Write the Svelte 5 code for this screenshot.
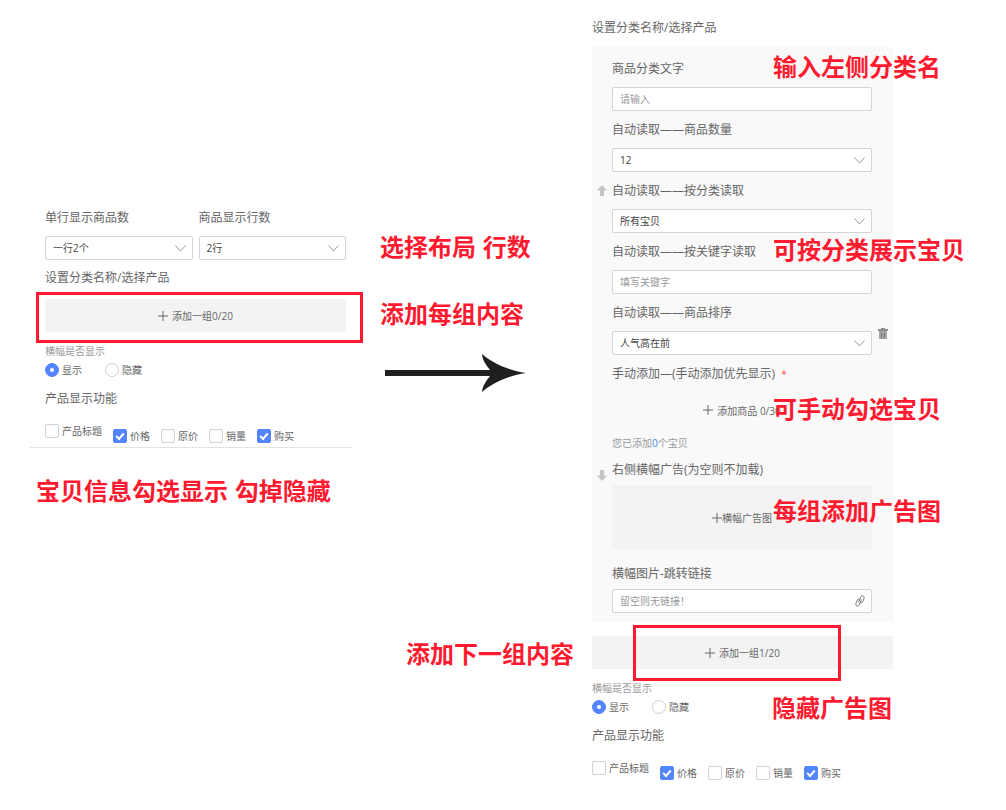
<script>
  let perRow = $state('一行2个');
  let rows = $state('2行');
  let count = $state('12');
  let category = $state('所有宝贝');
  let order = $state('人气高在前');

  const features = [
    { name: '产品标题', on: false },
    { name: '价格', on: true },
    { name: '原价', on: false },
    { name: '销量', on: false },
    { name: '购买', on: true }
  ];
</script>

{#snippet plus()}
  <svg class="plus" width="10" height="10" viewBox="0 0 10 10" aria-hidden="true">
    <path d="M5 0V10M0 5H10" stroke="#666" stroke-width="1" fill="none" />
  </svg>
{/snippet}

{#snippet chevron()}
  <svg class="chevron" width="11" height="7" viewBox="0 0 11 7" aria-hidden="true">
    <path d="M.5 .5L5.500 6L10.500 .5" stroke="#999" stroke-width="1" fill="none" />
  </svg>
{/snippet}

{#snippet moveArrow()}
  <svg width="10" height="11" viewBox="0 0 10 11" aria-hidden="true">
    <path d="M5 0L10 5.500H7V11H3V5.500H0Z" fill="#c4c4c4" />
  </svg>
{/snippet}

{#snippet display(id)}
  <fieldset class="banner-mode">
    <legend>横幅是否显示</legend>
    <div class="radios">
      <label><input type="radio" name="banner-{id}" checked />显示</label>
      <label><input type="radio" name="banner-{id}" />隐藏</label>
    </div>
  </fieldset>
  <fieldset class="features">
    <legend>产品显示功能</legend>
    <div class="checks">
      {#each features as f}
        <label><input type="checkbox" checked={f.on} />{f.name}</label>
      {/each}
    </div>
  </fieldset>
{/snippet}

<main>
  <section class="col left">
    <div class="pair">
      <div class="field">
        <label for="per-row">单行显示商品数</label>
        <div class="control">
          <select id="per-row" bind:value={perRow}><option>一行2个</option></select>
          {@render chevron()}
        </div>
      </div>
      <div class="field">
        <label for="rows">商品显示行数</label>
        <div class="control">
          <select id="rows" bind:value={rows}><option>2行</option></select>
          {@render chevron()}
        </div>
      </div>
    </div>
    <h2>设置分类名称/选择产品</h2>
    <div class="add-wrap first">
      <button class="add" type="button">{@render plus()}添加一组0/20</button>
      <span class="frame"></span>
    </div>
    {@render display('a')}
    <hr />
    <p class="note summary">宝贝信息勾选显示 勾掉隐藏</p>
  </section>

  <section class="middle">
    <p class="note">选择布局 行数</p>
    <p class="note second">添加每组内容</p>
    <svg class="arrow" width="142" height="38" viewBox="0 0 142 38" aria-hidden="true">
      <path
        d="M0 16H105C101 11 97.500 6 97 0C107 9 124 16.500 141 19C124 21.500 107 29 97 38C97.500 32 101 27 105 22H0Z"
        fill="#1f1f1f"
      />
    </svg>
    <p class="note next">添加下一组内容</p>
  </section>

  <section class="col right">
    <h2>设置分类名称/选择产品</h2>
    <div class="group">
      <div class="gutter moves">
        <button type="button" aria-label="上移">{@render moveArrow()}</button>
        <button type="button" class="down" aria-label="下移">{@render moveArrow()}</button>
      </div>
      <div class="fields">
        <div class="field">
          <label for="title">商品分类文字</label>
          <div class="control"><input id="title" type="text" placeholder="请输入" /></div>
          <span class="note pin">输入左侧分类名</span>
        </div>
        <div class="field">
          <label for="count">自动读取——商品数量</label>
          <div class="control">
            <select id="count" bind:value={count}><option>12</option></select>
            {@render chevron()}
          </div>
        </div>
        <div class="field">
          <label for="category">自动读取——按分类读取</label>
          <div class="control">
            <select id="category" bind:value={category}><option>所有宝贝</option></select>
            {@render chevron()}
          </div>
        </div>
        <div class="field">
          <label for="keyword">自动读取——按关键字读取</label>
          <div class="control"><input id="keyword" type="text" placeholder="填写关键字" /></div>
          <span class="note pin">可按分类展示宝贝</span>
        </div>
        <div class="field">
          <label for="order">自动读取——商品排序</label>
          <div class="control">
            <select id="order" bind:value={order}><option>人气高在前</option></select>
            {@render chevron()}
          </div>
        </div>
        <div class="manual">
          <h3>手动添加—(手动添加优先显示) <span class="star">*</span></h3>
          <div class="goods">
            <button class="plain" type="button">{@render plus()}添加商品 0/30</button>
            <span class="note pin">可手动勾选宝贝</span>
          </div>
          <p class="hint">您已添加<b>0</b>个宝贝</p>
        </div>
        <div class="banner">
          <h3>右侧横幅广告(为空则不加载)</h3>
          <div class="drop">
            <button type="button">{@render plus()}横幅广告图</button>
            <span class="note pin">每组添加广告图</span>
          </div>
        </div>
        <div class="field tight">
          <label for="link">横幅图片-跳转链接</label>
          <div class="control">
            <input id="link" type="text" placeholder="留空则无链接！" />
            <svg class="link" width="10" height="12" viewBox="0 0 10 12" aria-hidden="true">
              <g fill="none" stroke="#777" stroke-width="1" stroke-linecap="round">
                <path d="M3.800 6.800L5.500 2.500C6 1 7 .6 8 1C9.200 1.500 9.400 2.500 9 3.600L7.600 6.800C7.200 7.700 6.300 8.100 5.400 7.700" />
                <path d="M6.200 5L4.500 9.300C4 10.800 3 11.300 2 10.900C.8 10.400 .6 9.400 1 8.300L2.400 5.100C2.800 4.200 3.700 3.800 4.600 4.200" />
              </g>
            </svg>
          </div>
        </div>
      </div>
      <div class="gutter">
        <button type="button" aria-label="删除">
          <svg width="10" height="11" viewBox="0 0 10 11" aria-hidden="true">
            <path d="M3 0H7V1H10V3H0V1H3Z" fill="#8c8c8c" />
            <path d="M1 3H9V11H1Z" fill="#a3a3a3" />
            <path d="M3.500 4.500V9.500M6.500 4.500V9.500" stroke="#777" stroke-width="1" />
          </svg>
        </button>
      </div>
    </div>
    <div class="add-wrap second-add">
      <button class="add" type="button">{@render plus()}添加一组1/20</button>
      <span class="frame"></span>
    </div>
    <div class="options">
      {@render display('b')}
      <span class="note hide">隐藏广告图</span>
    </div>
  </section>
</main>

<style>
  :global(body) {
    background: #fff;
  }
  main {
    display: grid;
    grid-template-columns: 301fr 246fr 301fr 113fr;
    align-items: start;
    padding: 0 0 24px 45px;
    overflow: hidden;
    font-family: 'Open Sans', 'Noto Sans CJK SC', sans-serif;
    font-size: 10px;
    color: #666;
  }
  h2,
  h3,
  p,
  fieldset,
  legend {
    margin: 0;
    padding: 0;
    border: 0;
    font-weight: 400;
  }
  h2,
  h3,
  .field > label,
  .features legend {
    display: block;
    font-size: 12px;
    line-height: 22px;
    white-space: nowrap;
  }
  button,
  input,
  select {
    font: inherit;
    color: inherit;
    margin: 0;
    box-sizing: border-box;
  }
  button {
    border: 0;
    padding: 0;
    background: none;
    display: flex;
    align-items: center;
    justify-content: center;
    white-space: nowrap;
    cursor: pointer;
  }
  .left {
    padding-top: 207px;
  }
  .pair {
    display: grid;
    grid-template-columns: 1fr 1fr;
    gap: 6px;
  }
  .field {
    display: flex;
    flex-direction: column;
    gap: 7px;
    position: relative;
  }
  .tight {
    gap: 4px;
  }
  .control {
    display: grid;
    align-items: center;
  }
  .control > * {
    grid-area: 1 / 1;
  }
  .control input,
  .control select {
    appearance: none;
    width: 100%;
    height: 24px;
    padding: 0 7px;
    border: 1px solid #d3d4dc;
    border-radius: 2px;
    background: #fff;
    color: #444;
    outline: 0;
  }
  .control input::placeholder {
    color: #999;
    opacity: 1;
  }
  .chevron,
  .link {
    justify-self: end;
    margin-right: 7px;
    pointer-events: none;
  }
  .left h2 {
    margin-top: 7px;
  }
  .add-wrap {
    position: relative;
  }
  .first {
    margin-top: 10px;
  }
  .add {
    width: 100%;
    height: 33px;
    gap: 4px;
    background: #f3f3f3;
  }
  .frame {
    position: absolute;
    border: 3px solid #ff1a30;
    pointer-events: none;
  }
  .first .frame {
    inset: -7px -17px -11px -9px;
  }
  .second-add .frame {
    inset: -11px 52px -12px 41px;
  }
  .banner-mode {
    margin-top: 11px;
  }
  .banner-mode legend {
    line-height: 16px;
    color: #999;
  }
  .radios {
    display: flex;
    gap: 23px;
    margin-top: 3px;
  }
  .radios label,
  .checks label {
    display: flex;
    align-items: center;
    gap: 3px;
    line-height: 16px;
    white-space: nowrap;
  }
  .radios input,
  .checks input {
    appearance: none;
    display: grid;
    place-items: center;
    width: 14px;
    height: 14px;
    border: 1px solid #d0d1da;
    background: #fff;
  }
  .radios input {
    border-radius: 50%;
  }
  .checks input {
    border-radius: 2px;
  }
  .radios input:checked,
  .checks input:checked {
    border-color: #5584ff;
    background: #5584ff;
  }
  .radios input:checked::after {
    content: '';
    width: 4px;
    height: 4px;
    border-radius: 50%;
    background: #fff;
  }
  .checks input:checked::after {
    content: '';
    box-sizing: border-box;
    width: 8px;
    height: 5px;
    margin-bottom: 2px;
    border: solid #fff;
    border-width: 0 0 2px 2px;
    transform: rotate(-48deg);
  }
  .features {
    margin-top: 10px;
  }
  .checks {
    display: flex;
    align-items: flex-end;
    gap: 11px;
    margin-top: 13px;
  }
  .checks label:first-child {
    padding-bottom: 5px;
  }
  hr {
    height: 1px;
    margin: 3px -6px 0 -15px;
    border: 0;
    background: #e4e4e4;
  }
  .note {
    font-family: 'Liberation Sans', 'Noto Sans CJK SC', sans-serif;
    font-size: 24px;
    line-height: 32px;
    font-weight: 700;
    color: #ff1a30;
    white-space: nowrap;
  }
  .summary {
    margin: 28px 0 0 -9px;
  }
  .middle {
    padding: 232px 0 0 34px;
  }
  .second {
    margin-top: 35px;
  }
  .arrow {
    display: block;
    margin: 23px 0 0 5px;
  }
  .next {
    margin: 247px 0 0 26px;
  }
  .right {
    padding-top: 17px;
  }
  .group {
    display: grid;
    grid-template-columns: 20px 1fr 21px;
    margin-top: 8px;
    background: #f9f9f9;
  }
  .gutter {
    display: flex;
    flex-direction: column;
    align-items: center;
    justify-content: center;
    padding-bottom: 3px;
  }
  .moves {
    gap: 274px;
  }
  .down {
    transform: rotate(180deg);
  }
  .fields {
    display: flex;
    flex-direction: column;
    gap: 8px;
    padding: 11px 0 9px;
  }
  .pin {
    position: absolute;
    left: 161px;
    top: -6px;
    pointer-events: none;
  }
  .star {
    margin-left: 3px;
    font-size: 10px;
    color: #ff4d4f;
  }
  .goods {
    position: relative;
    display: flex;
    justify-content: center;
    margin-top: 15px;
  }
  .plain {
    height: 20px;
    gap: 4px;
  }
  .hint {
    margin-top: 15px;
    line-height: 16px;
    color: #999;
  }
  .hint b {
    font-weight: 400;
    color: #2a8cf0;
  }
  .drop {
    position: relative;
    margin: 4px 0 5px;
  }
  .drop button {
    width: 100%;
    height: 65px;
    background: #f3f3f3;
  }
  .drop .pin {
    top: 11px;
  }
  .second-add {
    margin-top: 14px;
  }
  .options {
    position: relative;
  }
  .hide {
    position: absolute;
    left: 180px;
    top: 13px;
  }
</style>
